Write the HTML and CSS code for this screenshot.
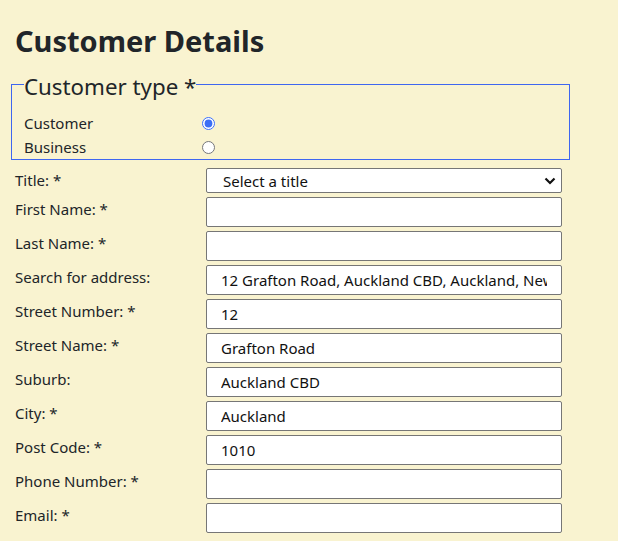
FILE: index.html
```html
<!DOCTYPE html>
<html lang="en">
<head>
<meta charset="utf-8">
<title>Customer Details</title>
<link rel="stylesheet" href="styles.css">
</head>
<body>
<main class="page">
  <h1 class="title">Customer Details</h1>
  <fieldset class="type-box">
    <legend class="type-legend">Customer type *</legend>
    <div class="radio-row">
      <label class="radio-label" for="t-customer">Customer</label>
      <input class="radio" type="radio" id="t-customer" name="ctype" checked>
    </div>
    <div class="radio-row">
      <label class="radio-label" for="t-business">Business</label>
      <input class="radio" type="radio" id="t-business" name="ctype">
    </div>
  </fieldset>
  <form class="form">
    <label class="field-label" for="f-title">Title: *</label>
    <div class="select-wrap">
      <select class="select" id="f-title">
        <option>Select a title</option>
      </select>
      <svg class="chevron" width="12" height="8" viewBox="0 0 12 8"><path d="M1.5 1.5 L6 6 L10.5 1.5" fill="none" stroke="#111" stroke-width="2.2"/></svg>
    </div>
    <label class="field-label" for="f-first">First Name: *</label>
    <input class="input" id="f-first" type="text">
    <label class="field-label" for="f-last">Last Name: *</label>
    <input class="input" id="f-last" type="text">
    <label class="field-label" for="f-search">Search for address:</label>
    <input class="input" id="f-search" type="text" value="12 Grafton Road, Auckland CBD, Auckland, New Zealand">
    <label class="field-label" for="f-num">Street Number: *</label>
    <input class="input" id="f-num" type="text" value="12">
    <label class="field-label" for="f-street">Street Name: *</label>
    <input class="input" id="f-street" type="text" value="Grafton Road">
    <label class="field-label" for="f-suburb">Suburb:</label>
    <input class="input" id="f-suburb" type="text" value="Auckland CBD">
    <label class="field-label" for="f-city">City: *</label>
    <input class="input" id="f-city" type="text" value="Auckland">
    <label class="field-label" for="f-post">Post Code: *</label>
    <input class="input" id="f-post" type="text" value="1010">
    <label class="field-label" for="f-phone">Phone Number: *</label>
    <input class="input" id="f-phone" type="text">
    <label class="field-label" for="f-email">Email: *</label>
    <input class="input" id="f-email" type="text">
  </form>
</main>
</body>
</html>
```
FILE: styles.css
```css
html, body {
  margin: 0;
  padding: 0;
}
body {
  background: #f9f3d0;
  color: #212529;
  font-family: "Noto Sans", "Open Sans", sans-serif;
  font-size: 15px;
}
.page {
  padding: 0 0 0 11px;
}
.title {
  margin: 0;
  padding: 20px 0 0 4px;
  font-size: 29px;
  line-height: 42px;
  font-weight: 700;
  color: #212529;
}
.type-box {
  margin: 5px 0 0 0;
  width: 559px;
  box-sizing: border-box;
  border: 1px solid #3f66f0;
  padding: 10px 12px 0 12px;
}
.type-legend {
  padding: 6px 0 0 0;
  font-size: 22.3px;
  line-height: 28px;
  color: #212529;
}
.radio-row {
  display: grid;
  grid-template-columns: 178px 14px;
  align-items: center;
  height: 24px;
}
.radio-label {
  line-height: 24px;
}
.radio {
  margin: 0;
  width: 13px;
  height: 13px;
  accent-color: #3b6ef5;
}
.form {
  display: grid;
  grid-template-columns: 191px 356px;
  row-gap: 4px;
  padding: 8px 0 0 4px;
}
.field-label {
  line-height: 20px;
  padding-top: 2px;
}
.select-wrap {
  position: relative;
  height: 25px;
}
.select {
  appearance: none;
  -webkit-appearance: none;
  width: 356px;
  height: 25px;
  box-sizing: border-box;
  border: 1px solid #767676;
  border-radius: 2px;
  background: #fff;
  padding: 0 0 0 16px;
  font-family: inherit;
  font-size: 15px;
  color: #111;
}
.chevron {
  position: absolute;
  right: 6px;
  top: 9px;
}
.input {
  width: 356px;
  height: 30px;
  box-sizing: border-box;
  border: 1px solid #767676;
  border-radius: 2px;
  background: #fff;
  padding: 0 14px;
  margin: 0;
  font-family: inherit;
  font-size: 15px;
  color: #111;
}
```
